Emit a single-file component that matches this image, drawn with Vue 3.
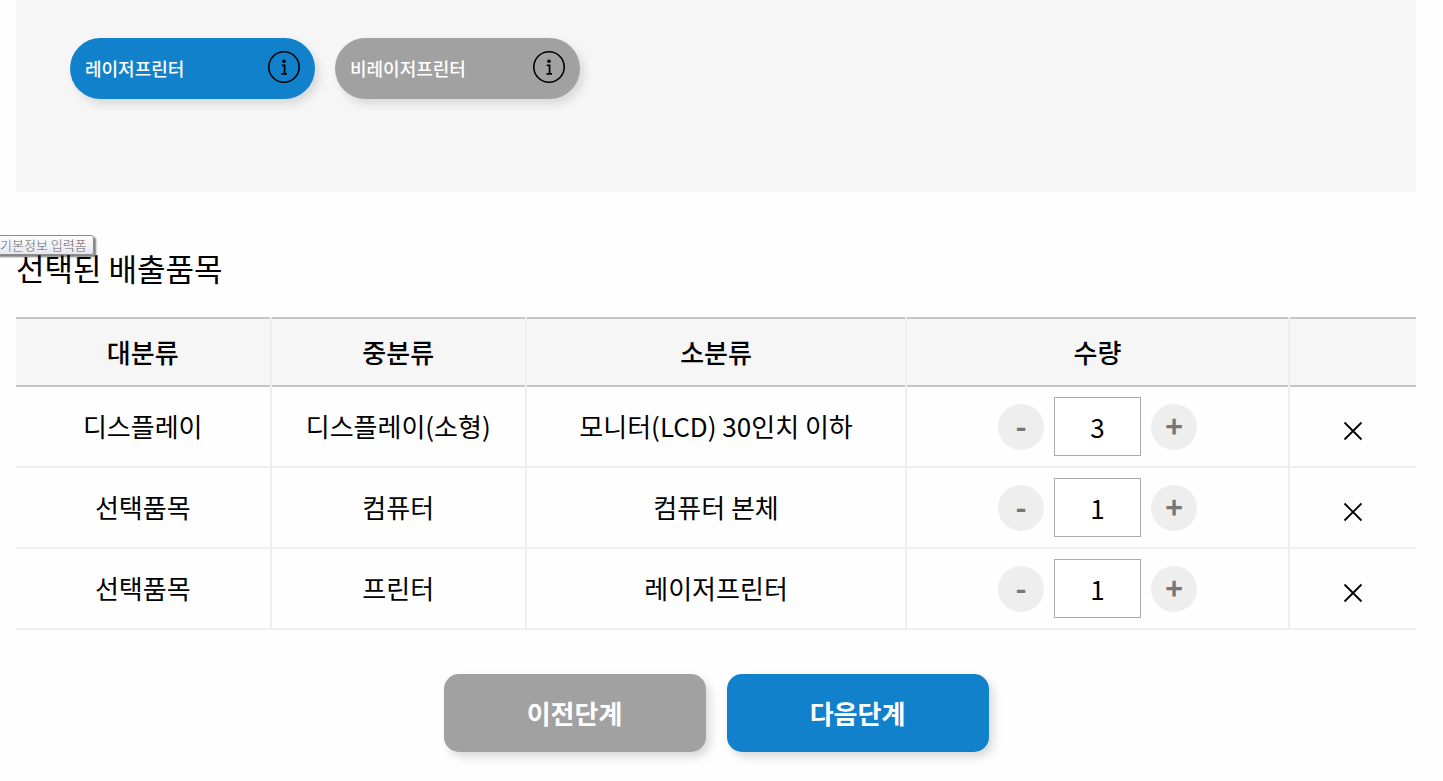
<script setup>
import { ref } from 'vue'

const kinds = ref([
  { name: '레이저프린터', active: true },
  { name: '비레이저프린터', active: false },
])

const items = ref([
  { id: 1, major: '디스플레이', middle: '디스플레이(소형)', minor: '모니터(LCD) 30인치 이하', count: 3 },
  { id: 2, major: '선택품목', middle: '컴퓨터', minor: '컴퓨터 본체', count: 1 },
  { id: 3, major: '선택품목', middle: '프린터', minor: '레이저프린터', count: 1 },
])

function select(kind) {
  kinds.value.forEach((k) => { k.active = k === kind })
}

function remove(id) {
  items.value = items.value.filter((i) => i.id !== id)
}
</script>

<template>
  <main class="page">
    <section class="kinds">
      <div v-for="kind in kinds" :key="kind.name" class="pill" :class="{ active: kind.active }">
        <button type="button" class="pill-name" @click="select(kind)">{{ kind.name }}</button>
        <button type="button" class="info" :aria-label="kind.name + ' 안내'">
          <svg width="34" height="34" viewBox="0 0 34 34" aria-hidden="true">
            <circle cx="17" cy="17" r="15.2" fill="none" stroke="#000" stroke-width="1.6" />
            <circle cx="17" cy="11.3" r="1.8" />
            <path d="M14.8 15.3H17.6V23.5M14.5 23.8H20" fill="none" stroke="#000" stroke-width="1.7" />
          </svg>
        </button>
      </div>
    </section>

    <section class="selected">
      <h2>선택된 배출품목</h2>
      <span class="tip" role="tooltip">기본정보 입력폼</span>
      <table>
        <colgroup>
          <col class="c-major"><col class="c-middle"><col class="c-minor"><col class="c-count"><col class="c-remove">
        </colgroup>
        <thead>
          <tr>
            <th scope="col">대분류</th>
            <th scope="col">중분류</th>
            <th scope="col">소분류</th>
            <th scope="col">수량</th>
            <td></td>
          </tr>
        </thead>
        <tbody>
          <tr v-for="item in items" :key="item.id">
            <td>{{ item.major }}</td>
            <td>{{ item.middle }}</td>
            <td>{{ item.minor }}</td>
            <td class="count">
              <div class="stepper">
                <button type="button" aria-label="수량 줄이기" @click="item.count = Math.max(1, item.count - 1)">-</button>
                <input v-model.number="item.count" type="text" inputmode="numeric" :aria-label="item.minor + ' 수량'">
                <button type="button" aria-label="수량 늘리기" @click="item.count++">+</button>
              </div>
            </td>
            <td>
              <button type="button" class="remove" aria-label="삭제" @click="remove(item.id)">
                <svg width="20" height="20" viewBox="0 0 20 20" aria-hidden="true">
                  <path d="M1.5 1.5L18.5 18.5M18.5 1.5L1.5 18.5" stroke="#000" stroke-width="1.8" />
                </svg>
              </button>
            </td>
          </tr>
        </tbody>
      </table>
    </section>

    <div class="steps">
      <button type="button">이전단계</button>
      <button type="button" class="next">다음단계</button>
    </div>
  </main>
</template>

<style>
body {
  background: #fefefe;
}
</style>

<style scoped>
.page {
  padding: 0 27px 28px 16px;
  font-family: "Noto Sans CJK KR", sans-serif;
  font-size: 26px;
  color: #000;
}
button,
input {
  box-sizing: border-box;
  margin: 0;
  padding: 0;
  border: 0;
  background: none;
  font: inherit;
  color: inherit;
}
button {
  cursor: pointer;
}
.kinds {
  display: flex;
  align-items: flex-start;
  gap: 20px;
  box-sizing: border-box;
  min-height: 192px;
  padding: 38px 54px;
  background: #f6f6f6;
}
.pill {
  display: flex;
  align-items: center;
  justify-content: space-between;
  box-sizing: border-box;
  width: 245px;
  height: 61px;
  padding: 0 14px 0 15px;
  border-radius: 31px;
  background: #a1a1a1;
  box-shadow: 4px 5px 10px rgba(0, 0, 0, 0.12);
  color: #fff;
}
.pill.active {
  background: #1281cb;
}
.pill-name {
  padding-bottom: 2px;
  font-size: 18px;
  font-weight: 500;
  line-height: 28px;
}
.info {
  display: flex;
  padding-bottom: 3px;
}
.selected {
  position: relative;
  padding-top: 52px;
}
h2 {
  margin: 0 0 25px;
  font-size: 31px;
  font-weight: 400;
  line-height: 48px;
}
.tip {
  position: absolute;
  top: 43px;
  left: -20px;
  padding: 0 6px 1px 3px;
  border: 1px solid #8c8c8c;
  border-radius: 3px;
  background: linear-gradient(#fff, #e6e6f0);
  box-shadow: 2px 2px 2px rgba(0, 0, 0, 0.5);
  font-size: 13px;
  font-weight: 300;
  line-height: 17px;
  color: #666;
}
table {
  width: 100%;
  table-layout: fixed;
  border-spacing: 0;
}
.c-major,
.c-middle {
  width: 18.25%;
}
.c-minor {
  width: 27.15%;
}
.c-count {
  width: 27.35%;
}
.c-remove {
  width: 9%;
}
th,
td {
  position: relative;
  box-sizing: border-box;
  padding: 0 2px 2px 0;
  border-bottom: 2px solid #eee;
  text-align: center;
}
td.count {
  padding-bottom: 0;
}
td:last-child {
  padding: 0;
}
thead th,
thead td {
  height: 70px;
  border-top: 2px solid #c7c7c7;
  border-bottom-color: #c7c7c7;
  background: #f6f6f6;
  font-weight: 500;
}
tbody td {
  height: 81px;
}
tr > :not(:last-child)::after {
  content: "";
  position: absolute;
  top: 0;
  right: 0;
  bottom: -2px;
  width: 2px;
  background: #eee;
}
thead tr > :not(:last-child)::after {
  top: -2px;
}
.stepper {
  display: flex;
  align-items: center;
  justify-content: center;
  gap: 10px;
}
.stepper button {
  width: 46px;
  height: 46px;
  padding-bottom: 4px;
  border-radius: 50%;
  background: #eee;
  font-size: 30px;
  font-weight: 700;
  line-height: 42px;
  color: #777;
}
.stepper input {
  width: 87px;
  height: 59px;
  border: 1px solid #aaa;
  background: #fff;
  text-align: center;
}
.remove {
  display: block;
  margin: 0 auto;
  padding-top: 8px;
}
.remove svg {
  display: block;
}
.steps {
  display: flex;
  justify-content: center;
  gap: 21px;
  margin-top: 44px;
}
.steps button {
  width: 262px;
  height: 78px;
  padding-bottom: 2px;
  border-radius: 15px;
  background: #a1a1a1;
  box-shadow: 4px 5px 10px rgba(0, 0, 0, 0.15);
  font-weight: 700;
  color: #fff;
}
.steps .next {
  background: #1281cb;
}
</style>
